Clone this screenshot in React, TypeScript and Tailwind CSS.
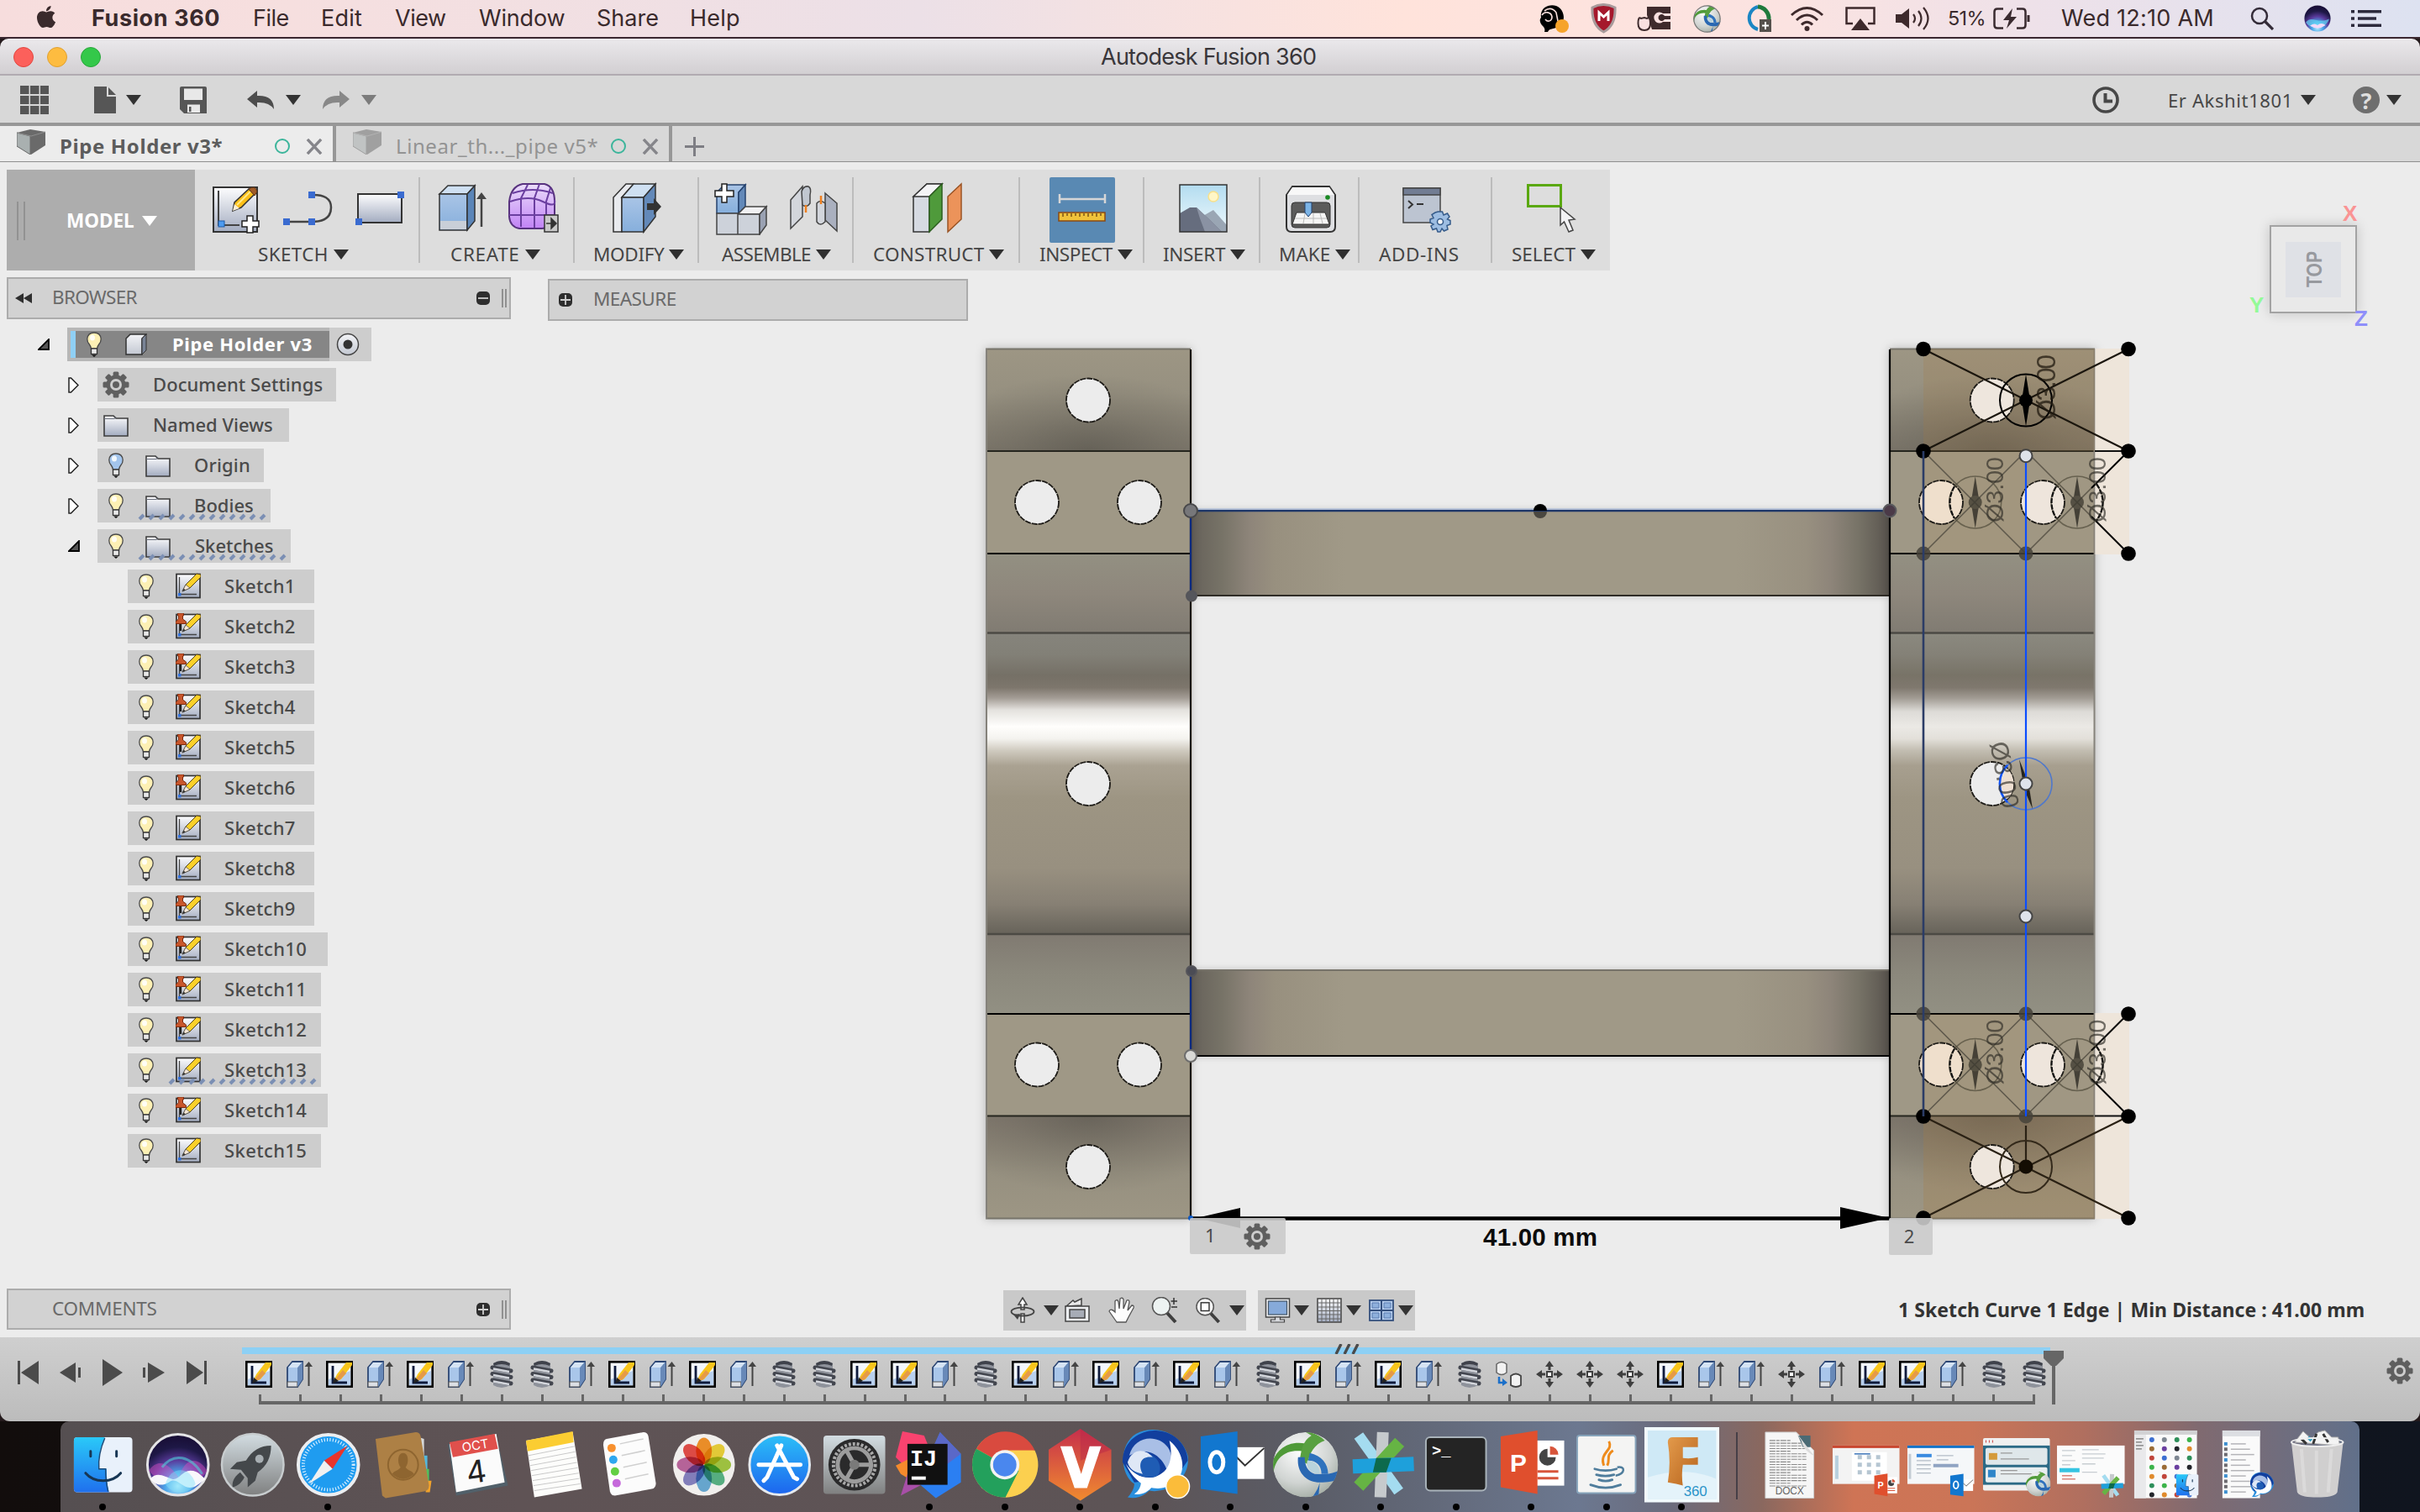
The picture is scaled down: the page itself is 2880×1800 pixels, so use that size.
import React, { useLayoutEffect, useRef, useState } from "react";
import { FaApple } from "react-icons/fa";

/* Text that spreads its letters so that it fills the width of its box. */
function Fit({ className, children }: { className: string; children: string }) {
  const outer = useRef<HTMLSpanElement>(null);
  const inner = useRef<HTMLSpanElement>(null);
  const [spacing, setSpacing] = useState(0);
  useLayoutEffect(() => {
    if (!outer.current || !inner.current) return;
    const free = outer.current.clientWidth - inner.current.offsetWidth;
    setSpacing(free / children.length);
  }, [children]);
  return (
    <span ref={outer} className={`block shrink-0 whitespace-nowrap ${className}`}>
      <span ref={inner} className="inline-block" style={{ letterSpacing: spacing }}>
        {children}
      </span>
    </span>
  );
}

function Arrow({ className = "ml-1.5 text-[#2f2f2f]" }: { className?: string }) {
  return (
    <svg className={`h-[12px] w-[18px] shrink-0 ${className}`} viewBox="0 0 18 12">
      <path d="M0 0H18L9 12Z" fill="currentColor" />
    </svg>
  );
}

function Ico({ box, className, children }: { box: string; className: string; children: React.ReactNode }) {
  return (
    <svg viewBox={box} className={`shrink-0 ${className}`} fill="none">
      {children}
    </svg>
  );
}

function Gear({ className }: { className: string }) {
  return (
    <svg viewBox="-16 -16 32 32" className={`shrink-0 ${className}`}>
      <g fill="#5f5f5f">
        {[0, 45, 90, 135].map((a) => (
          <rect key={a} x="-3.4" y="-15.5" width="6.8" height="31" rx="1.5" transform={`rotate(${a})`} />
        ))}
        <circle r="11.5" />
      </g>
      <circle r="7" fill="#cdcdcd" />
      <circle r="4" fill="#5f5f5f" />
    </svg>
  );
}

function Defs() {
  return (
    <svg className="absolute h-0 w-0">
      <defs>
        <linearGradient id="silver" x1="0" y1="0" x2="0" y2="1">
          <stop offset="0" stopColor="#fdfdfe" />
          <stop offset="1" stopColor="#a3acc0" />
        </linearGradient>
        <linearGradient id="silverLight" x1="0" y1="0" x2="0" y2="1">
          <stop offset="0" stopColor="#f3f4f7" />
          <stop offset="1" stopColor="#c3c8d2" />
        </linearGradient>
        <linearGradient id="blueFace" x1="0" y1="0" x2="0" y2="1">
          <stop offset="0" stopColor="#a9c4e6" />
          <stop offset="1" stopColor="#86afdc" />
        </linearGradient>
        <linearGradient id="purple" x1="0" y1="0" x2="0" y2="1">
          <stop offset="0" stopColor="#eadcfa" />
          <stop offset="1" stopColor="#c183f5" />
        </linearGradient>
        <linearGradient id="sky" x1="0" y1="0" x2="0" y2="1">
          <stop offset="0" stopColor="#b3dcf0" />
          <stop offset="1" stopColor="#eef8fc" />
        </linearGradient>
        <linearGradient id="mid" x1="0" y1="0" x2="0" y2="1">
          <stop offset="0" stopColor="#86847c" />
          <stop offset=".07" stopColor="#828077" />
          <stop offset=".14" stopColor="#757066" />
          <stop offset=".18" stopColor="#7d766c" />
          <stop offset=".215" stopColor="#a39c95" />
          <stop offset=".255" stopColor="#e4e2de" />
          <stop offset=".31" stopColor="#fffefc" />
          <stop offset=".35" stopColor="#f4f3ef" />
          <stop offset=".39" stopColor="#cfcabf" />
          <stop offset=".44" stopColor="#aaa292" />
          <stop offset=".55" stopColor="#9d9583" />
          <stop offset=".78" stopColor="#989080" />
          <stop offset=".9" stopColor="#878074" />
          <stop offset="1" stopColor="#67635a" />
        </linearGradient>
        <linearGradient id="midDull" x1="0" y1="0" x2="0" y2="1">
          <stop offset="0" stopColor="#8b897f" />
          <stop offset=".07" stopColor="#848177" />
          <stop offset=".14" stopColor="#787367" />
          <stop offset=".18" stopColor="#7f786e" />
          <stop offset=".215" stopColor="#a19b93" />
          <stop offset=".26" stopColor="#dddbd7" />
          <stop offset=".31" stopColor="#ebe9e5" />
          <stop offset=".35" stopColor="#e3e0da" />
          <stop offset=".39" stopColor="#c2bdb1" />
          <stop offset=".44" stopColor="#a79f8f" />
          <stop offset=".55" stopColor="#9d9583" />
          <stop offset=".78" stopColor="#989080" />
          <stop offset=".9" stopColor="#878074" />
          <stop offset="1" stopColor="#67635a" />
        </linearGradient>
        <linearGradient id="seg" x1="0" y1="0" x2="0" y2="1">
          <stop offset="0" stopColor="#9d9684" />
          <stop offset=".45" stopColor="#969080" />
          <stop offset="1" stopColor="#7f796d" />
        </linearGradient>
        <linearGradient id="segUp" x1="0" y1="1" x2="0" y2="0">
          <stop offset="0" stopColor="#9d9684" />
          <stop offset=".45" stopColor="#969080" />
          <stop offset="1" stopColor="#827a6f" />
        </linearGradient>
        <linearGradient id="soft" x1="0" y1="0" x2="0" y2="1">
          <stop offset="0" stopColor="#939082" />
          <stop offset=".5" stopColor="#8e877c" />
          <stop offset="1" stopColor="#807b72" />
        </linearGradient>
        <linearGradient id="softUp" x1="0" y1="1" x2="0" y2="0">
          <stop offset="0" stopColor="#929083" />
          <stop offset=".5" stopColor="#8b887c" />
          <stop offset="1" stopColor="#807a71" />
        </linearGradient>
        <radialGradient id="shadeDown" cx=".5" cy="1" r=".75">
          <stop offset="0" stopColor="#55524a" stopOpacity=".6" />
          <stop offset=".5" stopColor="#55524a" stopOpacity=".25" />
          <stop offset="1" stopColor="#55524a" stopOpacity="0" />
        </radialGradient>
        <radialGradient id="shadeUp" cx=".5" cy="0" r=".75">
          <stop offset="0" stopColor="#55524a" stopOpacity=".55" />
          <stop offset=".5" stopColor="#55524a" stopOpacity=".22" />
          <stop offset="1" stopColor="#55524a" stopOpacity="0" />
        </radialGradient>
        <linearGradient id="bar">
          <stop offset="0" stopColor="#66615a" />
          <stop offset=".045" stopColor="#777367" />
          <stop offset=".085" stopColor="#8e857a" />
          <stop offset=".12" stopColor="#98907f" />
          <stop offset=".22" stopColor="#a09987" />
          <stop offset=".78" stopColor="#a09987" />
          <stop offset=".88" stopColor="#989080" />
          <stop offset=".915" stopColor="#8e857a" />
          <stop offset=".955" stopColor="#777367" />
          <stop offset="1" stopColor="#59544e" />
        </linearGradient>
        <pattern id="hatch" width="12" height="10" patternUnits="userSpaceOnUse">
          <path d="M2 8L7 3" stroke="#7b8fb4" strokeWidth="4" />
        </pattern>
        <radialGradient id="siri" cx=".5" cy=".85" r=".85">
          <stop offset="0" stopColor="#bff0fd" />
          <stop offset=".25" stopColor="#4aa6ea" />
          <stop offset=".5" stopColor="#5a3a9c" />
          <stop offset=".75" stopColor="#1e1846" />
          <stop offset="1" stopColor="#170c33" />
        </radialGradient>
        <linearGradient id="gray" x1="0" y1="0" x2="0" y2="1">
          <stop offset="0" stopColor="#d3dde2" />
          <stop offset="1" stopColor="#7f8080" />
        </linearGradient>
        <linearGradient id="finder" x1="0" y1="0" x2="0" y2="1">
          <stop offset="0" stopColor="#2ac9f8" />
          <stop offset="1" stopColor="#1f70ee" />
        </linearGradient>
        <linearGradient id="store" x1="0" y1="0" x2="0" y2="1">
          <stop offset="0" stopColor="#2cc0f8" />
          <stop offset="1" stopColor="#1c64ee" />
        </linearGradient>
        <radialGradient id="orb" cx=".4" cy=".3" r=".8">
          <stop offset="0" stopColor="#fdfdfd" />
          <stop offset=".6" stopColor="#d0d4d2" />
          <stop offset="1" stopColor="#9aa49a" />
        </radialGradient>
        <linearGradient id="vivid" x1="0" y1="0" x2="0" y2="1">
          <stop offset="0" stopColor="#c62f4c" />
          <stop offset="1" stopColor="#f08b2f" />
        </linearGradient>
        <linearGradient id="fus" x1="0" y1="0" x2="1" y2="1">
          <stop offset="0" stopColor="#e39a4b" />
          <stop offset="1" stopColor="#b7641d" />
        </linearGradient>
        <clipPath id="disc"><circle cx="45" cy="45" r="39" /></clipPath>
      </defs>
    </svg>
  );
}

function OrbMark() {
  return (
    <g clipPath="url(#disc)">
      <circle cx="45" cy="45" r="39" fill="url(#orb)" />
      <path d="M6 58C8 34 24 24 48 30L54 22C30 14 12 22 4 44Z" fill="#4f9a38" />
      <path d="M42 4C54 6 62 10 68 16C56 20 50 30 47 44L38 40C40 26 42 16 52 10Z" fill="#58a040" />
      <path d="M36 36C34 54 46 66 62 66L60 88H50C56 80 60 74 62 66C74 66 82 64 88 60V50C76 58 66 56 56 56C48 54 44 46 44 36Z" fill="#2a68b2" />
      <path d="M50 31C64 34 72 44 72 56H64C64 46 58 40 48 40Z" fill="#2f72bd" />
      <path d="M47 40C45 48 50 56 62 56C62 46 56 40 47 40Z" fill="#b9d3dc" />
    </g>
  );
}

function BubbleMark() {
  return (
    <>
      <path d="M12 84C18 78 20 72 20 68C2 56 2 20 22 8C44 -4 76 6 84 34C88 62 60 80 38 76C30 84 20 86 12 84Z" fill="#2a8fdd" />
      <path d="M6 42C6 14 30 3 46 4C70 5 84 24 84 40L70 60L20 66Z" fill="#123f9e" />
      <path d="M14 34C20 10 48 8 60 24C66 32 66 46 60 54C54 34 36 22 14 34Z" fill="#a9bfe6" />
      <path d="M62 16C80 30 84 56 66 68C48 80 22 72 10 44C18 56 30 62 42 60C60 56 68 40 62 16Z" fill="#fff" />
      <path d="M14 44C16 28 38 26 48 40C54 50 50 60 42 60C30 60 18 58 14 44Z" fill="#1f5cb4" />
      <path d="M12 42C18 24 34 26 42 36C28 34 24 44 30 56C20 54 14 50 12 42Z" fill="#dfe8f6" />
      <path d="M20 80C26 76 28 70 28 66L42 71C36 78 28 82 20 80Z" fill="#fff" />
    </>
  );
}

function StarMark() {
  return (
    <g transform="translate(45 45)" strokeWidth="13" strokeLinejoin="round">
      <path d="M-27 -35L21 32" stroke="#a4dcf0" />
      <path d="M2 -39L-1 39" stroke="#c6cacd" strokeWidth="14" />
      <path d="M22 -27L-27 26" stroke="#66b444" strokeWidth="15" />
      <path d="M-34 2L39 -1" stroke="#1ea0db" strokeWidth="17" />
      <path d="M-6 -8H12L6 9H-10Z" fill="#0d6a4c" />
    </g>
  );
}

function FinderMark() {
  return (
    <>
      <rect x="11" y="12" width="70" height="66" rx="4" fill="#e9f1fb" />
      <path d="M15 12H48C42 26 40 38 41 50H50C50 60 51 70 53 78H15Q11 78 11 74V16Q11 12 15 12Z" fill="url(#finder)" />
      <path d="M31 29V35M62 29V35" stroke="#173654" strokeWidth="3" strokeLinecap="round" />
      <path d="M48 13C42 27 40 38 41 50H49C49 60 50 69 52 77" stroke="#1b4b79" strokeWidth="1.5" />
      <path d="M25 55C35 67 57 67 67 55" stroke="#173654" strokeWidth="3" strokeLinecap="round" />
    </>
  );
}

function OutlookMark() {
  return (
    <>
      <rect x="44" y="24" width="41" height="38" fill="#fff" />
      <path d="M52 36L62 46L85 25" stroke="#333" strokeWidth="2" />
      <path d="M9 11L53 5V80L9 74Z" fill="#1277cf" />
      <ellipse cx="28" cy="42" rx="8" ry="12" stroke="#fff" strokeWidth="5" />
    </>
  );
}

function PptMark() {
  return (
    <>
      <rect x="48" y="16" width="36" height="54" fill="#fff" />
      <path d="M64 26V36H74A10 10 0 1 1 64 26Z" fill="#444" />
      <path d="M67 23A10 10 0 0 1 77 33H67Z" fill="#d8553b" />
      <path d="M52 53H77M52 61H77" stroke="#d8553b" strokeWidth="3" />
      <path d="M8 11L52 4V80L8 72Z" fill="#e04f2d" />
      <text x="19" y="53" fontSize="30" fontWeight="700" fill="#fff" fontFamily="Liberation Sans">P</text>
    </>
  );
}

const petals = ["#f7962b", "#f0d73c", "#a6cd45", "#5bb98a", "#6cb0dd", "#8a86c8", "#c069a4", "#e9504a"];

const dock: { name: string; open?: boolean; art: React.ReactNode }[] = [
  { name: "finder", open: true, art: <FinderMark /> },
  {
    name: "siri",
    art: (
      <>
        <circle cx="45" cy="45" r="36.5" fill="url(#siri)" stroke="#e4e4e6" strokeWidth="3" />
        <path d="M10 52C22 36 34 44 46 60C54 34 70 36 80 52C72 66 60 62 50 60C36 68 22 66 10 52Z" fill="#d94fc0" opacity=".45" />
        <path d="M26 48C40 30 60 34 74 56" stroke="#4fd0d8" strokeWidth="3" opacity=".6" />
        <path d="M12 62C20 52 30 60 38 62C46 64 50 52 60 52C70 52 74 60 78 62C70 68 64 74 56 72C46 68 42 60 34 66C24 72 18 68 12 62Z" fill="#fff" opacity=".95" />
        <path d="M30 68C36 46 60 46 66 68C58 82 38 82 30 68Z" fill="#7fe0f8" opacity=".45" />
      </>
    ),
  },
  {
    name: "launchpad",
    art: (
      <>
        <circle cx="45" cy="45" r="37" fill="url(#gray)" stroke="#c7ccce" strokeWidth="2.5" />
        <path d="M67 22C54 22 44 28 37 40L26 42L18 50L31 51L39 61V72L48 64L51 54C62 46 67 36 67 22Z" fill="#44484b" />
        <circle cx="53" cy="38" r="5" fill="#a8afb3" />
        <path d="M30 54C22 60 20 66 21 72C28 70 32 66 35 60Z" fill="#44484b" />
      </>
    ),
  },
  {
    name: "safari",
    open: true,
    art: (
      <>
        <circle cx="45" cy="45" r="36" fill="#1f9cf0" stroke="#eceef0" strokeWidth="4" />
        <circle cx="45" cy="45" r="30" stroke="#d8efff" strokeWidth="4" strokeDasharray="1.2 2.2" />
        <path d="M68 22L50 50L40 40Z" fill="#e8342c" />
        <path d="M22 68L40 40L50 50Z" fill="#f1f1f1" />
      </>
    ),
  },
  {
    name: "contacts",
    art: (
      <>
        <path d="M64 12L70 14V36H66Z" fill="#d7d9da" />
        <path d="M68 34H74V52H68Z" fill="#55b9dd" />
        <path d="M70 50H76V66H70Z" fill="#52c15d" />
        <path d="M72 64H79L77 78H72Z" fill="#f2a32b" />
        <path d="M12 14L60 6Q65 6 66 11L76 70Q76 76 70 77L24 85L20 82Z" fill="#ad8045" />
        <circle cx="45" cy="45" r="18" stroke="#8e6530" strokeWidth="2" />
        <path d="M45 31C38 31 38 44 42 48C40 52 34 52 32 56Q45 68 58 56C56 52 50 52 48 48C52 44 52 31 45 31Z" fill="#8e6530" />
      </>
    ),
  },
  {
    name: "calendar",
    art: (
      <>
        <path d="M8 20L66 10L80 70L18 82Z" fill="#51606a" />
        <path d="M10 20L66 8L76 66L18 78Z" fill="#fbfbfb" />
        <path d="M10 18L64 8L68 26L14 36Z" fill="#e0504c" />
        <text x="26" y="30" fontSize="15" fill="#fff" fontFamily="Inter" transform="rotate(-10 26 30)">OCT</text>
        <text x="32" y="68" fontSize="37" fill="#222" fontFamily="Inter" transform="rotate(-8 32 68)">4</text>
      </>
    ),
  },
  {
    name: "notes",
    art: (
      <>
        <path d="M12 16L68 6L79 74L22 84Z" fill="#fdfdfb" />
        <path d="M12 16L68 5L69 18L14 29Z" fill="#fbcd32" />
        {[0, 1, 2, 3, 4, 5, 6, 7].map((i) => (
          <path key={i} d={`M${15 + i} ${34 + i * 6}L${70 + i} ${23 + i * 6.4}`} stroke="#c9c9c9" />
        ))}
      </>
    ),
  },
  {
    name: "reminders",
    art: (
      <>
        <path d="M18 14L62 6Q67 6 68 11L77 67Q77 73 72 74L28 82Q23 82 22 77L14 21Q14 15 18 14Z" fill="#fcfcfc" />
        {["#f7902e", "#2ea7ef", "#62cf43", "#c669db"].map((c, i) => (
          <g key={c}>
            <circle cx={24 + i * 2} cy={25 + i * 14} r="5" fill={c} />
            <path d={`M${34 + i * 2} ${20 + i * 14}L${62 + i * 2} ${14 + i * 14}`} stroke="#d0d0d0" strokeWidth="1.5" />
          </g>
        ))}
      </>
    ),
  },
  {
    name: "photos",
    art: (
      <>
        <circle cx="45" cy="45" r="37" fill="#f1efed" />
        {petals.map((c, i) => (
          <ellipse key={c} className="mix-blend-multiply" cx="45" cy="28.500" rx="9.500" ry="16" fill={c} transform={`rotate(${i * 45} 45 45)`} />
        ))}
      </>
    ),
  },
  {
    name: "appstore",
    art: (
      <>
        <circle cx="45" cy="45" r="36" fill="url(#store)" stroke="#e6eaee" strokeWidth="3" />
        <path d="M47 22L30 60L26 64M42 22L62 60L66 62" stroke="#fff" strokeWidth="5" strokeLinecap="round" />
        <path d="M20 45H70" stroke="#fff" strokeWidth="5" strokeLinecap="round" />
      </>
    ),
  },
  {
    name: "preferences",
    art: (
      <>
        <rect x="8" y="10" width="74" height="70" rx="4" fill="url(#gray)" />
        <circle cx="45" cy="45" r="31" fill="#2a2a2b" />
        <circle cx="45" cy="45" r="25" stroke="#a9a9a9" strokeWidth="4" strokeDasharray="3 2" />
        <circle cx="45" cy="45" r="20" stroke="#9c9c9c" strokeWidth="5" />
        <path d="M45 45L63 45M45 45L36 29M45 45L36 61" stroke="#9c9c9c" strokeWidth="5" />
        <circle cx="45" cy="45" r="6" fill="#7a7a7a" />
      </>
    ),
  },
  {
    name: "idea",
    open: true,
    art: (
      <>
        <path d="M12 5L38 10L46 30L20 52L4 36Z" fill="#f8436f" />
        <path d="M4 46L20 38V62L10 56Z" fill="#f58a2c" />
        <path d="M18 56L44 64L10 82Z" fill="#a84fa8" />
        <path d="M57 6L82 32V66L52 85L30 66Z" fill="#2b7ff2" />
        <path d="M57 6L82 32L66 44L46 30Z" fill="#5a68c8" />
        <rect x="18" y="20" width="48" height="49" fill="#111" />
        <text x="21" y="46" fontSize="27" fontWeight="700" fill="#fff" fontFamily="Liberation Mono">IJ</text>
        <path d="M23 61H40" stroke="#fff" strokeWidth="4" />
      </>
    ),
  },
  {
    name: "chrome",
    open: true,
    art: (
      <>
        <circle cx="45" cy="45" r="39" fill="#fcd04f" />
        <path d="M45 45L11 26A39 39 0 0 1 81 28H45Z" fill="#d94a3f" />
        <path d="M45 45L11 26A39 39 0 0 0 46 84L62 52Z" fill="#23a05c" />
        <path d="M45 28H81A39 39 0 0 1 46 84L62 52Z" fill="#fcd04f" />
        <circle cx="45" cy="45" r="17.5" fill="#f3f3f3" />
        <circle cx="45" cy="45" r="14" fill="#4a87ee" />
      </>
    ),
  },
  {
    name: "vivaldi",
    open: true,
    art: (
      <>
        <path d="M45 2L82 27V64L45 88L7 64V27Z" fill="url(#vivid)" />
        <path d="M45 2L82 27L45 40Z" fill="#b92848" opacity=".5" />
        <path d="M21 23H35L46 56L56 23H70L53 73H38Z" fill="#fff" />
      </>
    ),
  },
  {
    name: "messenger",
    open: true,
    art: (
      <>
        <BubbleMark />
        <circle cx="72" cy="71" r="14" fill="#fbbc3a" stroke="#fff" strokeWidth="1.5" />
      </>
    ),
  },
  { name: "outlook", open: true, art: <OutlookMark /> },
  { name: "vpn", open: true, art: <OrbMark /> },
  { name: "hub", open: true, art: <StarMark /> },
  {
    name: "terminal",
    open: true,
    art: (
      <>
        <rect x="9" y="12" width="72" height="64" rx="5" fill="#242424" stroke="#a9b3ba" strokeWidth="2" />
        <text x="16" y="34" fontSize="19" fontWeight="700" fill="#fff" fontFamily="Liberation Mono">&gt;_</text>
      </>
    ),
  },
  { name: "powerpoint", open: true, art: <PptMark /> },
  {
    name: "java",
    open: true,
    art: (
      <>
        <rect x="10" y="10" width="70" height="69" rx="3" fill="#f4f4f3" stroke="#86a3ba" strokeWidth="2" />
        <path d="M48 17C54 28 36 30 42 46M53 28C44 34 50 38 46 46" stroke="#ee8b1c" strokeWidth="3" />
        <path d="M31 50Q44 54 57 50M33 57Q44 60 54 57M36 63Q44 66 52 63M26 69Q44 76 62 69" stroke="#4f7d9c" strokeWidth="2.800" strokeLinecap="round" />
        <path d="M58 48C68 46 68 56 56 58" stroke="#4f7d9c" strokeWidth="2.500" />
      </>
    ),
  },
  {
    name: "fusion",
    open: true,
    art: (
      <>
        <rect x="2" y="2" width="86" height="86" fill="#cfe9f6" stroke="#f2fafd" strokeWidth="4" />
        <path d="M4 60Q50 46 86 62V86H4Z" fill="#e4f3fa" />
        <path d="M28 18Q28 12 34 12H64V24H46V37Q56 38 64 36V45H46Q44 58 46 70L38 68L28 66Q32 42 28 18Z" fill="url(#fus)" />
        <text x="47" y="82" fontSize="17" fill="#2a93c9" fontFamily="Liberation Sans" textLength="28">360</text>
      </>
    ),
  },
];

const minis: { name: string; art: React.ReactNode }[] = [
  {
    name: "docx",
    art: (
      <>
        <path d="M15 6H52L73 28V85H15Z" fill="#f6f6f6" stroke="#ccc" />
        {Array.from({ length: 18 }, (_, i) => (
          <path key={i} d={`M20 ${16 + i * 3.2}H${i % 4 === 0 ? 46 : 64}`} stroke="#8a8a8a" strokeWidth="1.1" strokeDasharray="7 1 4 1" />
        ))}
        <path d="M54 10H69V24H60Z" fill="#4a6a74" />
        <path d="M50 4L73 34C66 30 60 26 58 16Z" fill="#ddd" />
        <text x="27" y="80" fontSize="12" fill="#666" fontFamily="Liberation Sans" textLength="34">DOCX</text>
      </>
    ),
  },
  {
    name: "slides",
    art: (
      <>
        <rect x="5" y="22" width="80" height="46" fill="#f3f3f3" />
        <rect x="5" y="22" width="80" height="3" fill="#c8462f" />
        <rect x="8" y="34" width="4" height="28" fill="#b8d0de" />
        <rect x="28" y="30" width="42" height="34" fill="#fff" />
        {[36, 45, 54].map((y) => (
          <path key={y} d={`M35 ${y}H40M46 ${y}H51M57 ${y}H62`} stroke="#b6c6d2" strokeWidth="5" />
        ))}
        <path d="M31 32H50" stroke="#3c74b8" strokeWidth="1.500" />
        <g transform="translate(52 54) scale(.36)"><PptMark /></g>
      </>
    ),
  },
  {
    name: "mail",
    art: (
      <>
        <rect x="5" y="22" width="80" height="46" fill="#f5f7f9" />
        <rect x="5" y="22" width="80" height="3" fill="#1272c8" />
        <path d="M8 32V62" stroke="#c4ccd4" strokeWidth="3" />
        <rect x="16" y="32" width="18" height="4" fill="#3a8be0" />
        <path d="M16 40H33M16 45H33M16 50H33M16 55H33M40 34H60M40 39H54" stroke="#b3bcc6" strokeWidth="1.3" />
        <rect x="36" y="44" width="30" height="4" fill="#8fa3c2" />
        <g transform="translate(53 54) scale(.36)"><OutlookMark /></g>
      </>
    ),
  },
  {
    name: "vpnwin",
    art: (
      <>
        <rect x="5" y="13" width="80" height="63" rx="2" fill="#f0f0f0" />
        <rect x="5" y="22" width="80" height="47" fill="#2c6a86" />
        <rect x="8" y="25" width="74" height="20" rx="2" fill="#dfe7ea" />
        <rect x="8" y="48" width="74" height="18" rx="2" fill="#e7edef" />
        <path d="M8 17H9M12 17H13M16 17H17" stroke="#c44" strokeWidth="3" />
        <rect x="12" y="31" width="10" height="8" fill="#d49a3a" />
        <path d="M26 31H40M26 38H60M26 52H46M26 56H66" stroke="#999" strokeWidth="1.2" />
        <rect x="11" y="51" width="9" height="9" fill="#2f86c9" />
        <g transform="translate(54 51) scale(.38)"><OrbMark /></g>
      </>
    ),
  },
  {
    name: "chat",
    art: (
      <>
        <rect x="4" y="22" width="81" height="46" fill="#fbfbfb" />
        <path d="M10 28H26M10 34H22M10 40H26M10 45H20M34 27H54M34 32H62M34 37H60M34 44H50M34 54H52" stroke="#c8cdd2" strokeWidth="1.3" />
        <rect x="7" y="49" width="24" height="5" fill="#35c4e2" />
        <path d="M10 58H22M10 62H26" stroke="#d8837a" strokeWidth="1.5" />
        <g transform="translate(53 54) scale(.36)"><StarMark /></g>
      </>
    ),
  },
  {
    name: "apps",
    art: (
      <>
        <rect x="6" y="4" width="75" height="81" fill="#fafafa" />
        <rect x="6" y="4" width="14" height="81" fill="#e9e9eb" />
        <rect x="6" y="4" width="75" height="5" fill="#d2d2d4" />
        <path d="M8 14H17M8 18H15M8 22H17M8 26H15" stroke="#777" strokeWidth="1.300" />
        {Array.from({ length: 28 }, (_, i) => (
          <circle
            key={i}
            cx={27 + (i % 4) * 15}
            cy={15 + Math.floor(i / 4) * 11}
            r="3"
            fill={["#3c6fd1", "#2e8f5a", "#9a6b35", "#23252b", "#c0453a", "#7e8792", "#3bb34a", "#6a3fa0", "#e08a2c"][(i * 5) % 9]}
          />
        ))}
        <g transform="translate(52 52) scale(.38)"><FinderMark /></g>
      </>
    ),
  },
  {
    name: "contactsWin",
    art: (
      <>
        <rect x="22" y="4" width="45" height="81" fill="#fafafa" />
        <rect x="22" y="4" width="45" height="7" fill="#dcdee2" />
        {Array.from({ length: 10 }, (_, i) => (
          <g key={i}>
            <rect x="24" y={18 + i * 6.4} width="4" height="4" fill={i % 3 ? "#6c6a70" : "#3d8fd0"} />
            <path d={`M32 ${20 + i * 6.4}H${50 + (i % 3) * 5}`} stroke="#b4b4b8" strokeWidth="1.5" />
          </g>
        ))}
        <g transform="translate(53 53) scale(.36)"><BubbleMark /></g>
      </>
    ),
  },
  {
    name: "trash",
    art: (
      <>
        <path d="M18 18L28 5L38 14L46 6L54 4L62 12L70 12L72 22Z" fill="#f4f4f4" stroke="#a7a7a7" />
        <path d="M26 14L32 20M44 8L40 20M52 8L58 18" stroke="#333" strokeWidth="3" />
        <path d="M34 12L38 16" stroke="#2b9ac0" strokeWidth="4" />
        <path d="M14 18Q45 28 76 18L69 78Q66 84 45 84Q24 84 21 78Z" fill="#d8d6d5" opacity=".93" />
        <path d="M26 26L30 78M44 28V80M62 26L58 78" stroke="#eceaea" strokeWidth="4" opacity=".4" />
        <ellipse cx="45" cy="18" rx="31" ry="5" stroke="#efefef" strokeWidth="2" />
      </>
    ),
  },
];

function DockItem({ art, open }: { art: React.ReactNode; open?: boolean }) {
  return (
    <div className="isolate flex w-[89.5px] shrink-0 flex-col items-center">
      <svg viewBox="0 0 90 90" className="h-[89.5px] w-[89.5px]" fill="none">{art}</svg>
      {open && <div className="mt-px h-2 w-2 rounded-full bg-black" />}
    </div>
  );
}

/* ---------- top bars ---------- */

function MenuBar() {
  return (
    <header className="flex h-[46px] items-center border-b-2 border-[#3a2730] bg-[linear-gradient(90deg,#f7dddd_0%,#f6dfdf_12%,#ece0e7_38%,#ffe3db_58%,#fbe3e1_74%,#eee1e9_84%,#dde2f1_100%)] font-[Inter,sans-serif] text-[27px] text-[#3a2a2c]">
      <FaApple className="ml-[40px] h-[34px] w-[30px] shrink-0 pb-1" />
      <Fit className="ml-[39px] w-[153px] font-bold">Fusion 360</Fit>
      <Fit className="ml-[39px] w-[43px]">File</Fit>
      <Fit className="ml-[38px] w-[49px]">Edit</Fit>
      <Fit className="ml-[39px] w-[61px]">View</Fit>
      <Fit className="ml-[39px] w-[102px]">Window</Fit>
      <Fit className="ml-[38px] w-[74px]">Share</Fit>
      <Fit className="ml-[37px] w-[60px]">Help</Fit>
      <div className="flex h-11 grow items-center justify-end">
        <Ico box="0 0 38 34" className="h-[34px] w-[38px]">
          <path d="M4 16C2 4 14 -1 22 2C32 6 34 20 26 26C20 30 14 28 12 33L8 33C9 30 8 28 6 26C2 22 2 18 4 16Z" fill="#000" />
          <path d="M5 13C8 8 16 9 17 15C17 20 12 22 9 18M8 8Q16 2 22 10L24 20" stroke="#f9dfdc" strokeWidth="1.600" />
          <circle cx="29" cy="26" r="8" fill="#f6a32a" />
        </Ico>
        <Ico box="0 0 31 36" className="ml-[25px] h-[36px] w-[31px]">
          <path d="M2 5Q15 -2 29 5Q30 26 15.500 34Q1 26 2 5Z" fill="#a5182c" stroke="#a79a9b" strokeWidth="3" />
          <path d="M10 21V11L15.500 16L21 11V21" stroke="#fff" strokeWidth="3" />
        </Ico>
        <Ico box="0 0 40 32" className="ml-[24px] h-[32px] w-[40px]">
          <path d="M12 2H40V29H18L12 12Z" fill="#3e2a2c" />
          <path d="M40 10H31A6.500 6.500 0 1 0 31 20H40V17H33A4 4 0 1 1 33 13H40Z" fill="#f9e0e0" />
          <path d="M1.500 22Q1.500 13 5 16L9 15L12 16Q16 13 16 22Q16 30 9 30Q1.500 30 1.500 22Z" fill="#f9e0e0" stroke="#3e2a2c" strokeWidth="2" />
        </Ico>
        <Ico box="5 5 80 80" className="ml-[27px] h-[33px] w-[33px]">
          <OrbMark />
          <circle cx="45" cy="45" r="38" stroke="#777" strokeWidth="3" />
        </Ico>
        <Ico box="0 0 32 34" className="ml-[28px] h-[34px] w-[32px]">
          <path d="M16 30A14 14 0 0 1 16 3" stroke="#1a86c4" strokeWidth="4" />
          <path d="M16 3A14 14 0 0 1 29 18" stroke="#1f7a3c" strokeWidth="5" />
          <rect x="18" y="18" width="14" height="15" fill="#55504c" />
          <path d="M25 21V30M21 25.500H29" stroke="#fff" strokeWidth="2" />
        </Ico>
        <Ico box="0 0 41 30" className="ml-[22px] h-[30px] w-[41px]">
          <path d="M2 11Q20.500 -6 39 11M8 17Q20.500 5 33 17M14 22.500Q20.500 16 27 22.500" stroke="#3e2a2c" strokeWidth="3" />
          <circle cx="20.500" cy="27" r="3" fill="#3e2a2c" />
        </Ico>
        <Ico box="0 0 36 30" className="ml-[25px] h-[30px] w-[36px]">
          <path d="M9 21H1.500V2.500H34.500V21H27" stroke="#3e2a2c" strokeWidth="2.500" />
          <path d="M18 15L29 29H7Z" fill="#3e2a2c" />
        </Ico>
        <Ico box="0 0 41 30" className="ml-[24px] h-[30px] w-[41px]">
          <path d="M0 10H7L16 3V27L7 20H0Z" fill="#3e2a2c" />
          <path d="M21 10Q25 15 21 20M27 6Q34 15 27 24M33 2Q44 15 33 28" stroke="#3e2a2c" strokeWidth="2.200" />
        </Ico>
        <Fit className="ml-[21px] w-[45px] text-[23.5px]">51%</Fit>
        <Ico box="0 0 45 26" className="ml-[9px] h-[26px] w-[45px]">
          <path d="M12 1.500H5Q1.500 1.500 1.500 5V21Q1.500 24.500 5 24.500H12M28 1.500H35Q38.500 1.500 38.500 5V21Q38.500 24.500 35 24.500H28" stroke="#3a2b30" strokeWidth="2.500" />
          <path d="M42 9V17" stroke="#3a2b30" strokeWidth="3" />
          <path d="M23 1L12 15H19L16 25L28 11H21Z" fill="#3a2b30" />
        </Ico>
        <Fit className="ml-[36px] w-[182px]">Wed 12:10 AM</Fit>
        <Ico box="0 0 28 28" className="ml-[43px] h-[28px] w-[28px]">
          <circle cx="11" cy="11" r="9" stroke="#332b38" strokeWidth="2.500" />
          <path d="M17.500 17.500L27 27" stroke="#332b38" strokeWidth="3.200" />
        </Ico>
        <Ico box="7 7 76 76" className="ml-[36px] h-[32px] w-[32px]">
          <circle cx="45" cy="45" r="37" fill="url(#siri)" />
          <path d="M12 56C28 34 44 62 78 46C70 76 24 76 12 56Z" fill="#62d6f4" opacity=".7" />
          <path d="M24 66Q36 56 45 64Q56 54 68 64Q46 80 24 66Z" fill="#f3d9f8" />
        </Ico>
        <Ico box="0 0 36 20" className="mr-[46px] ml-[24px] h-[20px] w-[36px]">
          <path d="M0 1.800H4M8 1.800H36M0 10H4M8 10H30M0 18.200H4M8 18.200H36" stroke="#2c2a3c" strokeWidth="3.400" />
        </Ico>
      </div>
    </header>
  );
}

function TitleBar() {
  return (
    <div className="flex h-[44px] items-center rounded-t-[10px] border-b-2 border-[#b1abb1] bg-linear-to-b from-[#ebe9ec] to-[#d2cfd2] font-[Inter,sans-serif]">
      <div className="ml-[16px] flex gap-4 pt-px">
        <div className="h-6 w-6 rounded-full border border-[#e2463f] bg-[#fc605b]" />
        <div className="h-6 w-6 rounded-full border border-[#e0a030] bg-[#fdbc40]" />
        <div className="h-6 w-6 rounded-full border border-[#29a63a] bg-[#34c84a]" />
      </div>
      <Fit className="ml-[1190px] w-[256px] pt-0.5 text-[27px] text-[#39363a]">Autodesk Fusion 360</Fit>
    </div>
  );
}

function QuickBar() {
  return (
    <div className="flex h-[60px] items-center border-b-4 border-[#979797] bg-[#d8d8d8] pt-0.5">
      <Ico box="0 0 34 34" className="ml-[24px] h-[34px] w-[34px]">
        {[0, 12, 24].map((y) => [0, 12, 24].map((x) => <rect key={`${x}-${y}`} x={x} y={y} width="10.500" height="10" fill="#565656" />))}
      </Ico>
      <Ico box="0 0 26 32" className="ml-[54px] h-[32px] w-[26px]">
        <path d="M0 0H15V12H26V32H0Z" fill="#565656" />
        <path d="M17 1L26 10H17Z" fill="#565656" />
      </Ico>
      <Arrow className="ml-[12px] text-[#333]" />
      <Ico box="0 0 32 32" className="ml-[46px] h-[32px] w-[32px]">
        <path d="M2 0H30Q32 0 32 2V32H5L0 27V2Q0 0 2 0Z" fill="#565656" />
        <rect x="5" y="2.500" width="22" height="13.500" fill="#e8e8e8" />
        <rect x="9" y="21.500" width="15" height="9.500" fill="#e8e8e8" />
        <rect x="11" y="24" width="2.500" height="6" fill="#565656" />
      </Ico>
      <Ico box="0 0 32 22" className="ml-[48px] h-[22px] w-[32px]">
        <path d="M0 10L12 0V6Q32 5 32 22Q26 13 12 14V20Z" fill="#4d4d4d" />
      </Ico>
      <Arrow className="ml-[14px] text-[#333]" />
      <Ico box="0 0 32 22" className="ml-[26px] h-[22px] w-[32px]">
        <path d="M32 10L20 0V6Q0 5 0 22Q6 13 20 14V20Z" fill="#888" />
      </Ico>
      <Arrow className="ml-[14px] text-[#7c7c7c]" />
      <Ico box="0 0 32 32" className="ml-auto h-[32px] w-[32px]">
        <circle cx="16" cy="16" r="14" stroke="#474747" strokeWidth="3.600" />
        <path d="M15.500 8V17.500H24" stroke="#474747" strokeWidth="4" />
      </Ico>
      <Fit className="ml-[58px] w-[149px] font-[Noto_Sans,sans-serif] text-[22px] text-[#474747]">Er Akshit1801</Fit>
      <Arrow className="ml-[9px] text-[#333]" />
      <div className="ml-[44px] flex h-8 w-8 items-center justify-center rounded-full bg-[#6e6e6e] font-[Noto_Sans,sans-serif] text-[27px] leading-none font-bold text-[#dedede]">?</div>
      <Arrow className="mr-[22px] ml-[8px] text-[#333]" />
    </div>
  );
}

function TabCube({ dim }: { dim?: boolean }) {
  return (
    <Ico box="0 0 34 30" className={`ml-[20px] h-[30px] w-[34px] ${dim ? "opacity-50" : ""}`}>
      <path d="M0 4L16 0L34 3L34 19L17 30L0 20Z" fill="#6a6a6a" />
      <path d="M0 4L16 8V30L0 20Z" fill="#a9b0b0" />
      <path d="M0 4L16 8V30L0 20Z" stroke="#6a6a6a" />
      <path d="M0 4L17 8L34 3" stroke="#8e8e8e" />
    </Ico>
  );
}

function TabEnd() {
  return (
    <>
      <div className="h-[18px] w-[18px] rounded-full border-2 border-[#3cb59b]" />
      <svg viewBox="0 0 20 20" className="ml-[19px] h-[19px] w-[20px]">
        <path d="M1.500 1L18.500 19M18.500 1L1.500 19" stroke="#85858a" strokeWidth="3.600" />
      </svg>
    </>
  );
}

function Tabs() {
  return (
    <div className="flex h-[43px] border-b border-[#8f8f8f] bg-[#d8d8d8] font-[Noto_Sans,sans-serif] text-[24px]">
      <div className="flex w-[400px] items-center border-r-4 border-[#979797] bg-[#ececec]">
        <div className="-mt-1 flex"><TabCube /></div>
        <Fit className="ml-[17px] w-[194px] pt-1.5 font-bold text-[#5c5c5c]">Pipe Holder v3*</Fit>
        <div className="ml-[62px] flex items-center pt-1.5"><TabEnd /></div>
      </div>
      <div className="flex w-[400px] items-center border-r-4 border-[#979797]">
        <div className="-mt-1 flex"><TabCube dim /></div>
        <Fit className="ml-[17px] w-[241px] pt-1.5 text-[#939393]">Linear_th..._pipe v5*</Fit>
        <div className="ml-[15px] flex items-center pt-1.5"><TabEnd /></div>
      </div>
      <svg viewBox="0 0 23 23" className="mt-[13px] ml-[15px] h-[23px] w-[23px]">
        <path d="M11.500 0V23M0 11.500H23" stroke="#7e7e84" strokeWidth="3" />
      </svg>
    </div>
  );
}

/* ---------- ribbon ---------- */

function Group({ width, iconPad, labelPad, label, labelWidth, arrow = true, last, children }: {
  width: string; iconPad: string; labelPad: string; label: string; labelWidth: string; arrow?: boolean; last?: boolean; children: React.ReactNode;
}) {
  return (
    <div className={`flex shrink-0 ${width}`}>
      <div className="flex grow flex-col">
        <div className={`flex h-[86px] ${iconPad}`}>{children}</div>
        <div className={`flex h-[30px] items-center ${labelPad}`}>
          <Fit className={labelWidth}>{label}</Fit>
          {arrow && <Arrow />}
        </div>
      </div>
      {!last && <div className="mt-[9px] h-[102px] w-[2px] bg-[#bcbcbc]" />}
    </div>
  );
}

function Ribbon() {
  const big = "mt-[14px] h-[64px] w-[64px]";
  return (
    <div className="ml-2 flex h-[120px] w-[1908px] bg-[#dddddd] font-[Noto_Sans,sans-serif] text-[22.5px] text-[#454545]">
      <div className="flex w-[224px] items-center bg-[#adadad] pt-0.5">
        <div className="ml-[12px] h-[46px] w-[10px] border-x-2 border-[#929292]" />
        <Fit className="ml-[49px] w-[81px] font-bold text-white">MODEL</Fit>
        <Arrow className="ml-[9px] text-white" />
      </div>
      <Group width="w-[268px]" iconPad="pl-4 gap-[22px]" labelPad="pl-[75px]" label="SKETCH" labelWidth="w-[84px]">
        <Ico box="248 216 64 64" className={big}>
          <rect x="254" y="223" width="52" height="53" fill="url(#silver)" stroke="#333" strokeWidth="2" />
          <path d="M260 227V268H285" stroke="#444" strokeWidth="2" />
          <rect x="260" y="263" width="7" height="7" fill="#4d9bf0" stroke="#1d5aa8" />
          <path d="M277 251L279 241L296 225L303 231L287 247Z" fill="#fcbf17" stroke="#333" strokeWidth="1.500" />
          <path d="M282 244L298 228" stroke="#ffe98a" strokeWidth="2" />
          <path d="M296 225Q304 220 306 228L303 233Z" fill="#a05c28" stroke="#5e3313" strokeWidth="1" />
          <path d="M277 251L279 243L285 248Z" fill="#fbeed5" />
          <path d="M294 257H301V263H308V270H301V277H294V270H288V263H294Z" fill="#fff" stroke="#222" strokeWidth="1.500" />
        </Ico>
        <Ico box="334 216 64 64" className={big}>
          <path d="M341 264H371Q394 264 394 247Q394 231 370 232" stroke="#444" strokeWidth="2.500" />
          <path d="M337 260H345V268H337ZM367 260H375V268H367ZM367 228H375V236H367Z" fill="#3a6bd0" />
        </Ico>
        <Ico box="420 216 64 64" className={big}>
          <rect x="426" y="231" width="52" height="34" fill="url(#silver)" stroke="#333" strokeWidth="2" />
          <path d="M473 228H481V236H473ZM423 260H431V268H423Z" fill="#3a6bd0" />
        </Ico>
      </Group>
      <Group width="w-[184px]" iconPad="pl-4 gap-[22px]" labelPad="pl-[36px]" label="CREATE" labelWidth="w-[83px]">
        <Ico box="516 216 64 64" className={big}>
          <path d="M523 231L533 221H565L556 231Z" fill="#cfe0f2" stroke="#333" strokeWidth="1.500" />
          <rect x="523" y="231" width="33" height="43" fill="url(#blueFace)" stroke="#333" strokeWidth="1.500" />
          <rect x="524" y="263" width="31" height="10" fill="#c9cfd8" />
          <path d="M556 231L565 221V263L556 274Z" fill="#5b85b8" stroke="#333" strokeWidth="1.500" />
          <path d="M573 270V234" stroke="#444" strokeWidth="2.500" />
          <path d="M567 237L573 229L579 237Z" fill="#444" />
        </Ico>
        <Ico box="602 216 66 64" className="mt-[14px] h-[64px] w-[66px]">
          <path d="M606 240Q608 222 622 219H648Q660 222 660 240V260Q656 272 645 272H618Q607 270 606 258Z" fill="url(#purple)" stroke="#58327f" strokeWidth="2" />
          <path d="M607 240Q630 232 646 240T660 238M606 256H660M620 270V236L628 220M636 271V236L642 219M650 268V240L655 224M610 230Q634 222 658 230" stroke="#6b3fa0" strokeWidth="2" />
          <rect x="648" y="256" width="16" height="20" fill="#c9c9c9" stroke="#333" strokeWidth="1.500" />
          <path d="M650 266H656V260L662 266L656 272V266" fill="#333" stroke="#333" strokeWidth="1.500" />
        </Ico>
      </Group>
      <Group width="w-[148px]" iconPad="pl-[42px]" labelPad="pl-[22px]" label="MODIFY" labelWidth="w-[84px]">
        <Ico box="726 216 64 64" className={big}>
          <path d="M730 235L745 219H754L740 235V276H730Z" fill="#e8eaee" stroke="#333" strokeWidth="1.500" />
          <path d="M740 235L754 219H780L766 235Z" fill="#cfe0f2" stroke="#333" strokeWidth="1.500" />
          <rect x="740" y="235" width="26" height="41" fill="url(#blueFace)" stroke="#333" strokeWidth="1.500" />
          <path d="M766 235L780 219V258L766 276Z" fill="#6389b9" stroke="#333" strokeWidth="1.500" />
          <path d="M770 242H778V236L787 246L778 256V250H770Z" fill="#333" />
        </Ico>
      </Group>
      <Group width="w-[184px]" iconPad="pl-[4px] gap-[24px]" labelPad="pl-[27px]" label="ASSEMBLE" labelWidth="w-[106px]">
        <Ico box="836 216 80 64" className="mt-[14px] h-[64px] w-[80px]">
          <path d="M853 229L862 220H887L879 229V254H853Z" fill="url(#blueFace)" stroke="#24426e" strokeWidth="1.500" />
          <path d="M879 229L887 220V246L879 254Z" fill="#6389b9" stroke="#24426e" strokeWidth="1.500" />
          <path d="M878 255L887 246H912L904 255Z" fill="#f1f1f3" stroke="#444" strokeWidth="1.500" />
          <path d="M853 254H878V279H853ZM878 255H904V279H878Z" fill="#cdd2da" stroke="#444" strokeWidth="1.500" />
          <path d="M904 255L912 246V268L904 279Z" fill="#9aa2b3" stroke="#444" strokeWidth="1.500" />
          <path d="M859 219H865V227H873V234H865V241H859V234H851V227H859Z" fill="#fff" stroke="#222" strokeWidth="1.500" />
        </Ico>
        <Ico box="936 216 64 64" className="mt-[14px] -ml-1 h-[64px] w-[64px]">
          <path d="M941 238L955 222V258L941 272Z" fill="#d3d6dc" stroke="#444" strokeWidth="1.500" />
          <path d="M954 228Q956 221 962 222Q966 224 964 232V242Q960 248 955 244Z" fill="#c1c7d0" stroke="#444" strokeWidth="1.500" />
          <path d="M982 230L996 242V275L982 262Z" fill="#aab0bf" stroke="#444" strokeWidth="1.500" />
          <path d="M972 242Q976 237 982 242V264Q976 270 972 264Z" fill="#d3d6dc" stroke="#444" strokeWidth="1.500" />
          <path d="M977 233V243M959 244V253" stroke="#f08020" strokeWidth="2.500" />
        </Ico>
      </Group>
      <Group width="w-[198px]" iconPad="pl-[68px]" labelPad="pl-[23px]" label="CONSTRUCT" labelWidth="w-[132px]">
        <Ico box="1084 216 64 64" className={big}>
          <path d="M1087 234L1103 219H1121L1106 234V276H1087Z" fill="#d6dae2" stroke="#333" strokeWidth="1.500" />
          <path d="M1087 234L1103 219H1121L1106 234Z" fill="#f4f4f6" stroke="#333" strokeWidth="1.500" />
          <path d="M1106 234L1121 219V261L1106 276Z" fill="#4f9a3b" stroke="#2c5f1f" strokeWidth="1.500" />
          <path d="M1128 234L1144 219V261L1128 276Z" fill="#ec935a" stroke="#9a5425" strokeWidth="1.500" />
        </Ico>
      </Group>
      <Group width="w-[148px]" iconPad="pl-[35px]" labelPad="pl-[23px]" label="INSPECT" labelWidth="w-[87px]">
        <Ico box="1249 211 78 78" className="mt-[9px] h-[78px] w-[78px]">
          <rect x="1249" y="211" width="78" height="78" rx="2" fill="#5989b3" />
          <path d="M1261 237H1315M1261 231V242M1315 231V242" stroke="#d6d6d6" strokeWidth="2.500" />
          <rect x="1260" y="253" width="55" height="10" fill="#f0c23a" stroke="#8a4a14" strokeWidth="1.500" />
          <path d="M1265 254V258M1270 254V257M1275 254V258M1280 254V257M1285 254V258M1290 254V257M1295 254V258M1300 254V257M1305 254V258M1310 254V257" stroke="#5e3a10" strokeWidth="1.200" />
        </Ico>
      </Group>
      <Group width="w-[138px]" iconPad="pl-[38px]" labelPad="pl-[22px]" label="INSERT" labelWidth="w-[74px]">
        <Ico box="1400 216 64 64" className={big}>
          <rect x="1404" y="220" width="56" height="56" fill="url(#sky)" />
          <circle cx="1444" cy="234" r="6" fill="#fff6c6" stroke="#f8e08a" strokeWidth="1.500" />
          <path d="M1430 276V258L1444 250L1460 268V276Z" fill="#9aa6b4" />
          <path d="M1404 276V254L1416 247H1424L1440 262L1454 276Z" fill="#666d7e" />
          <path d="M1424 247L1428 260L1434 276H1454L1440 262Z" fill="#8a92a3" />
          <rect x="1404" y="220" width="56" height="56" stroke="#333" strokeWidth="1.500" />
        </Ico>
      </Group>
      <Group width="w-[118px]" iconPad="pl-[28px]" labelPad="pl-[22px]" label="MAKE" labelWidth="w-[61px]">
        <Ico box="1528 216 64 64" className={big}>
          <path d="M1531 232L1538 222H1582L1589 232V270Q1589 276 1583 276H1537Q1531 276 1531 270Z" fill="#dedfe2" stroke="#333" strokeWidth="2" />
          <path d="M1532 232L1538 223H1582L1588 232Z" fill="#f8f8f8" />
          <rect x="1537" y="241" width="46" height="30" rx="4" fill="#5b5b5b" stroke="#333" />
          <path d="M1543 253H1577L1582 267H1538Z" fill="#f5f5f5" stroke="#333" />
          <path d="M1553 254L1551 266M1563 254V266M1571 254L1574 266M1541 260H1579" stroke="#bbb" />
          <path d="M1553 241H1561V253L1557 258L1553 253Z" fill="#7cb4e6" stroke="#24426e" />
          <circle cx="1580" cy="235" r="2.800" fill="#1b8a24" />
        </Ico>
      </Group>
      <Group width="w-[158px]" iconPad="pl-[46px]" labelPad="pl-[23px]" label="ADD-INS" labelWidth="w-[96px]" arrow={false}>
        <Ico box="1664 216 64 64" className={big}>
          <rect x="1670" y="224" width="44" height="41" fill="#bcc4d1" stroke="#444" strokeWidth="1.500" />
          <rect x="1670" y="224" width="44" height="8" fill="#727d93" stroke="#444" strokeWidth="1.500" />
          <path d="M1676 239L1681 243.500L1676 248M1686 243H1694" stroke="#333" strokeWidth="2" />
          <g transform="translate(1714 264)" fill="#9dbde2" stroke="#355b8a" strokeWidth="1.500">
            <path d="M-2.500 -12H2.500L4 -8L8.500 -10L11 -6L8.500 -3L12 -1.500V3L8 4.500L9 9L4.500 11L2 8L0 12H-3L-4.500 8L-9 9.500L-11 5L-8 3L-12 1V-3L-8 -4.500L-10 -8.500L-6 -11Z" />
            <circle r="3.500" fill="#f2f4f7" />
          </g>
        </Ico>
      </Group>
      <Group width="w-[140px]" iconPad="pl-[38px]" labelPad="pl-[23px]" label="SELECT" labelWidth="w-[76px]" last>
        <Ico box="1814 216 64 64" className={big}>
          <rect x="1818.500" y="220.500" width="39" height="25" stroke="#5aa80f" strokeWidth="3" />
          <path d="M1857 247V268L1861.500 264L1867 276L1872 274L1867 262L1874 261Z" fill="#f2f2f4" stroke="#444" strokeWidth="1.500" />
        </Ico>
      </Group>
    </div>
  );
}

/* ---------- browser tree ---------- */

function Bulb({ blue }: { blue?: boolean }) {
  return (
    <svg viewBox="0 0 18 30" className="h-[30px] w-[18px] shrink-0">
      <path d="M5.500 20Q5 17 3 14.500Q.8 12 .8 8.500Q1.500 1 9 1Q16.500 1 17.200 8.500Q17.200 12 15 14.500Q13 17 12.500 20Z" fill={blue ? "#a3c5ec" : "#fdf0b4"} stroke="#4a4a4a" strokeWidth="1.300" />
      <ellipse cx="7" cy="7" rx="3" ry="3.500" fill="#fff" opacity=".85" />
      <rect x="5.500" y="20" width="7" height="6.500" fill="#e8e8e8" stroke="#333" strokeWidth="1.300" />
      <path d="M6 27.500H12L9 30Z" fill="#111" />
    </svg>
  );
}

function Folder() {
  return (
    <svg viewBox="0 0 30 27" className="h-[27px] w-[30px] shrink-0">
      <path d="M1 26V2H12L15 5H29V26Z" fill="url(#silver)" stroke="#3c3c3c" strokeWidth="1.600" />
      <path d="M1 5.500H13L15 3" stroke="#6a6f7c" strokeWidth="1.200" fill="none" />
    </svg>
  );
}

function SketchIcon({ pin }: { pin?: boolean }) {
  return (
    <svg viewBox="0 0 30 32" className="h-[32px] w-[30px] shrink-0">
      <rect x="1" y="1.500" width="28" height="28" fill="url(#silver)" stroke="#333" strokeWidth="1.700" />
      <path d="M4.500 5V25.500H25" stroke="#444" strokeWidth="1.300" fill="none" />
      <rect x="3" y="24" width="3.500" height="3.500" fill="#2f6fdb" />
      <path d="M8 22L12 14L25 1L30 2V5L17 18Z" fill="#fbd02a" stroke="#54431a" strokeWidth="1" />
      <path d="M8 22L12 14L17 18Z" fill="#f7e8d8" stroke="#555" strokeWidth=".8" />
      <path d="M8 22L9.500 18.500L12 20.500Z" fill="#333" />
      {pin && (
        <>
          <path d="M6 12V21" stroke="#222" strokeWidth="2.400" />
          <path d="M2.500 0H9.500V3H8.500V7L12.500 10V12.500H0V10L3.500 7V3H2.500Z" fill="#c8562b" stroke="#7c2c10" strokeWidth="1" />
        </>
      )}
    </svg>
  );
}

function Expander({ open, pad }: { open?: boolean; pad: string }) {
  return (
    <div className={`flex shrink-0 ${pad}`}>
      {open ? (
        <svg viewBox="0 0 14 14" className="h-[14px] w-[14px]"><path d="M13 1V13H1Z" fill="#555" stroke="#000" strokeWidth="1.800" /></svg>
      ) : (
        <svg viewBox="0 0 13 19" className="h-[19px] w-[13px]"><path d="M1 1H3.500L12 9.500L3.500 18H1Z" fill="#fff" stroke="#222" strokeWidth="1.500" /></svg>
      )}
    </div>
  );
}

function Hatch() {
  return (
    <svg className="absolute right-1 bottom-0.5 left-[48px] h-[10px] w-[calc(100%-52px)]">
      <rect width="100%" height="10" fill="url(#hatch)" />
    </svg>
  );
}

const pinned = new Set([2, 3, 4, 5, 6, 9, 10, 11, 12, 14]);

function Tree() {
  const cell = "relative flex h-10 items-center bg-[#cdcdcd]";
  return (
    <div className="flex flex-col gap-2 pt-[10px] font-[Noto_Sans,sans-serif] text-[22px] font-medium text-[#4a4a4a]">
      <div className="flex h-10 items-center">
        <Expander open pad="w-[80px] pl-[45px]" />
        <div className="flex h-10 w-[362px] items-center bg-[#cdcdcd]">
          <div className="flex h-10 w-[312px] items-center bg-[#b7b7b7] pl-1">
            <div className="flex h-8 w-[308px] items-center border-l-[6px] border-[#8fd0f5] bg-[#868686]">
              <div className="ml-[13px] flex"><Bulb /></div>
              <svg viewBox="0 0 26 26" className="ml-[28px] h-[26px] w-[26px]">
                <path d="M1 6L6 1H25L20 6V25H1Z" fill="url(#silverLight)" stroke="#333" strokeWidth="1.500" />
                <path d="M20 6L25 1V20L20 25Z" fill="#7a8496" stroke="#333" />
              </svg>
              <Fit className="ml-[30px] w-[167px] pb-0.5 font-bold text-white">Pipe Holder v3</Fit>
            </div>
          </div>
          <svg viewBox="0 0 28 28" className="ml-[8px] h-[28px] w-[28px]">
            <circle cx="14" cy="14" r="12.500" fill="url(#silverLight)" stroke="#444" strokeWidth="1.500" />
            <circle cx="14" cy="14" r="5.500" fill="#333" />
          </svg>
        </div>
      </div>
      <div className="flex items-center">
        <Expander pad="w-[116px] pl-[81px]" />
        <div className={`${cell} w-[284px]`}>
          <Gear className="ml-[6px] h-8 w-8" />
          <Fit className="ml-[28px] w-[202px] pb-0.5">Document Settings</Fit>
        </div>
      </div>
      <div className="flex items-center">
        <Expander pad="w-[116px] pl-[81px]" />
        <div className={`${cell} w-[228px]`}>
          <div className="ml-[7px] flex"><Folder /></div>
          <Fit className="ml-[29px] w-[143px] pb-0.5">Named Views</Fit>
        </div>
      </div>
      <div className="flex items-center">
        <Expander pad="w-[116px] pl-[81px]" />
        <div className={`${cell} w-[198px]`}>
          <div className="ml-[13px] flex items-center gap-[26px]"><Bulb blue /><Folder /></div>
          <Fit className="ml-[28px] w-[67px] pb-0.5">Origin</Fit>
        </div>
      </div>
      <div className="flex items-center">
        <Expander pad="w-[116px] pl-[81px]" />
        <div className={`${cell} w-[206px]`}>
          <div className="ml-[13px] flex items-center gap-[26px]"><Bulb /><Folder /></div>
          <Fit className="ml-[28px] w-[71px] pb-0.5">Bodies</Fit>
          <Hatch />
        </div>
      </div>
      <div className="flex items-center">
        <Expander open pad="w-[116px] pl-[81px]" />
        <div className={`${cell} w-[230px]`}>
          <div className="ml-[13px] flex items-center gap-[26px]"><Bulb /><Folder /></div>
          <Fit className="ml-[29px] w-[93px] pb-0.5">Sketches</Fit>
          <Hatch />
        </div>
      </div>
      {Array.from({ length: 15 }, (_, i) => i + 1).map((n) => (
        <div key={n} className={`${cell} ml-[152px] ${n < 10 ? "w-[222px]" : n === 10 || n === 14 ? "w-[238px]" : "w-[230px]"}`}>
          <div className="ml-[13px] flex items-center gap-[26px]"><Bulb /><SketchIcon pin={pinned.has(n)} /></div>
          <Fit className={`ml-[28px] pb-0.5 ${n < 10 ? "w-[85px]" : "w-[98px]"}`}>{`Sketch${n}`}</Fit>
          {n === 13 && <Hatch />}
        </div>
      ))}
    </div>
  );
}

function Knob({ plus, className }: { plus?: boolean; className: string }) {
  return (
    <svg viewBox="0 0 16 16" className={`h-[16px] w-[16px] ${className}`}>
      <rect width="16" height="16" rx="5" fill="#2e2e2e" />
      <path d={plus ? "M2 8H14M8 2V14" : "M2 8H14"} stroke="#cfcfcf" strokeWidth="1.800" />
    </svg>
  );
}

/* ---------- model ---------- */

function Hole({ x, y, fill = "#ececec" }: { x: number; y: number; fill?: string }) {
  return <circle cx={x} cy={y} r="26" fill={fill} stroke="#1c1a16" strokeWidth="1.800" strokeDasharray="7 1" />;
}

function Block({ x, w, sheen }: { x: number; w: number; sheen: string }) {
  return (
    <>
      <g className="drop-shadow-[0_0_6px_rgba(0,0,0,0.25)]">
        <rect x={x} y="415" width={w} height="1036" fill="#9f9886" />
      </g>
      <rect x={x} y="415" width={w} height="122" fill="url(#seg)" />
      <rect x={x} y="415" width={w} height="122" fill="url(#shadeDown)" />
      <rect x={x} y="659" width={w} height="95" fill="url(#soft)" />
      <rect x={x} y="754" width={w} height="358" fill={sheen} />
      <rect x={x} y="1112" width={w} height="95" fill="url(#softUp)" />
      <rect x={x} y="1329" width={w} height="122" fill="url(#segUp)" />
      <rect x={x} y="1329" width={w} height="122" fill="url(#shadeUp)" />
      <path d={`M${x} 537H${x + w}M${x} 1328.500H${x + w}`} stroke="#26261f" strokeWidth="2" />
      <path d={`M${x} 659H${x + w}M${x} 1207H${x + w}`} stroke="#000" strokeWidth="2" />
      <path d={`M${x} 753.500H${x + w}M${x} 1112H${x + w}`} stroke="#4c4a44" strokeWidth="2.500" />
      <path d={`M${x} 415.500H${x + w}M${x} 1450.500H${x + w}`} stroke="#77746b" strokeWidth="2" />
    </>
  );
}

function Dim({ x, y, size = 29, dark }: { x: number; y: number; size?: number; dark?: boolean }) {
  return (
    <text x={x} y={y} transform={`rotate(-90 ${x} ${y})`} fontSize={size} textLength="78" fill={dark ? "#211a10" : "#2c2a24"} opacity={dark ? 0.75 : 0.65} fontFamily="Liberation Sans">
      Ø3.00
    </text>
  );
}

function Rosette({ x, y, faint = true }: { x: number; y: number; faint?: boolean }) {
  return (
    <g opacity={faint ? 0.75 : 1}>
      <circle cx={x} cy={y} r="31" fill="none" stroke={faint ? "#55503f" : "#000"} strokeWidth={faint ? 1.6 : 2} />
      <path d={`M${x} ${y - 31}L${x + 5} ${y}L${x} ${y + 31}L${x - 5} ${y}Z`} fill={faint ? "#26241e" : "#000"} />
      <circle cx={x} cy={y} r="8" fill={faint ? "#3c392f" : "#000"} />
    </g>
  );
}

function Model() {
  const black: [number, number][] = [[2289, 415.5], [2533, 415.5], [2289, 537], [2533, 537], [2533, 659], [2533, 1207], [2289, 1329], [2533, 1329], [2289, 1450], [2533, 1450]];
  const gray: [number, number][] = [[2289, 659], [2411, 659], [2289, 1207], [2411, 1207], [2411, 1329]];
  return (
    <svg viewBox="0 193 2880 1399" className="absolute inset-0 h-full w-full" fill="none">
      <g className="drop-shadow-[0_0_5px_rgba(0,0,0,0.2)]">
        <rect x="1417" y="608" width="832" height="101" fill="url(#bar)" />
        <rect x="1417" y="1155" width="832" height="102" fill="url(#bar)" />
      </g>
      <path d="M1417 709H2249" stroke="#2f2c26" strokeWidth="2" />
      <path d="M1417 1155H2249" stroke="#77736a" strokeWidth="2" />
      <path d="M1417 1257H2249" stroke="#000" strokeWidth="2" />
      <Block x={1173} w={244} sheen="url(#mid)" />
      <Block x={2249} w={244} sheen="url(#midDull)" />
      <path d="M1174 415V1451M2492.500 415V1451" stroke="#85827b" strokeWidth="2" />
      <path d="M1417 416V1450" stroke="#170f02" strokeWidth="2.200" />
      <path d="M2249 416V1450" stroke="#000" strokeWidth="2.200" />

      <Hole x={1295} y={476.5} />
      <Hole x={1234} y={598} />
      <Hole x={1356} y={598} />
      <Hole x={1295} y={933} />
      <Hole x={1234} y={1267.5} />
      <Hole x={1356} y={1267.5} />
      <Hole x={1295} y={1389} />

      <rect x="2289" y="415" width="204" height="122" fill="#a67c45" opacity=".22" />
      <rect x="2289" y="1329" width="204" height="122" fill="#a67c45" opacity=".27" />
      <rect x="2289" y="537" width="122" height="122" fill="#c08c48" opacity=".12" />
      <rect x="2289" y="1207" width="122" height="122" fill="#c08c48" opacity=".12" />
      <rect x="2411" y="537" width="82" height="122" fill="#c08c48" opacity=".05" />
      <rect x="2411" y="1207" width="82" height="122" fill="#c08c48" opacity=".05" />
      <path d="M2493.500 415H2534V660H2493.500ZM2493.500 1206H2534V1451H2493.500Z" fill="#eee5da" />

      <Hole x={2370.7} y={476.5} fill="#eee6dd" />
      <Hole x={2370.7} y={1389} fill="#eee6dd" />
      <Hole x={2370.7} y={933} />
      <path d="M2389 915Q2396 922 2396.500 933Q2396 945 2389 951Q2373 933 2389 915Z" fill="#eedfd2" />
      {[598, 1267.5].map((y) => (
        <g key={y}>
          <Hole x={2310} y={y} fill="#efdfcc" />
          <Hole x={2431} y={y} fill="#eee5dc" />
          <g stroke="#5f594c" strokeWidth="1.600">
            <path d={`M2289 ${y - 61}L2411 ${y + 61}M2411 ${y - 61}L2289 ${y + 61}M2411 ${y - 61}L2490 ${y + 18}M2490 ${y - 18}L2411 ${y + 61}`} />
          </g>
          <path d={`M2489 ${y - 17}L2533 ${y - 61}M2489 ${y + 17}L2533 ${y + 61}`} stroke="#000" strokeWidth="2" />
          <Rosette x={2350.7} y={y} />
          <Rosette x={2472} y={y} />
          <path d={`M2326 ${y - 19}Q2315 ${y} 2326 ${y + 19}M2447 ${y - 19}Q2436 ${y} 2447 ${y + 19}M2495 ${y - 22}Q2510 ${y} 2495 ${y + 22}`} stroke="#111" strokeWidth="2.200" strokeDasharray="6 1.500" />
          <Dim x={2384} y={y + 24} />
          <Dim x={2506} y={y + 24} />
        </g>
      ))}
      <path d="M2493 537H2533M2493 1328.500H2533" stroke="#111" strokeWidth="2" />
      <path d="M2289 415.500L2533 537M2289 537L2533 415.500" stroke="#1b160e" strokeWidth="2.200" />
      <path d="M2289 1329L2533 1450M2289 1450L2533 1329M2411 1340V1389" stroke="#2a2114" strokeWidth="2.200" />
      <Rosette x={2411} y={476.5} faint={false} />
      <Dim x={2446} y={500} size={32} dark />
      <circle cx="2411" cy="1389" r="31" stroke="#33291a" strokeWidth="2" />
      <circle cx="2411" cy="1389" r="8.500" fill="#140d03" />

      {gray.map(([x, y]) => <circle key={`${x}-${y}`} cx={x} cy={y} r="8.500" fill="#45423a" opacity=".85" />)}
      {black.map(([x, y]) => <circle key={`${x}-${y}`} cx={x} cy={y} r="8.800" fill="#000" />)}

      <path d="M2289 537V1329" stroke="#2b3c66" strokeWidth="2.600" />
      <circle cx="2411" cy="933" r="31" stroke="#4f78cc" strokeWidth="1.600" />
      <path d="M2389 911A31 31 0 0 0 2389 955" stroke="#1254f5" strokeWidth="2.600" />
      <path d="M2403 904L2414 932L2419 963L2409 940Z" fill="#26241e" />
      <text x="2368" y="885" transform="rotate(79 2368 885)" fontSize="30" textLength="80" fill="#2c2a24" opacity=".65" fontFamily="Liberation Sans">Ø3.00</text>
      <path d="M2411 537V1329" stroke="#0a4dff" strokeWidth="2.200" />
      {[542.7, 933, 1091].map((y) => <circle key={y} cx="2411" cy={y} r="7.500" fill="#dfe3ea" stroke="#444" strokeWidth="2" />)}

      <path d="M1417 608H2249" stroke="#1d3668" strokeWidth="2.400" />
      <path d="M1417 606H2249" stroke="#aebdd8" strokeWidth="1.500" />
      <path d="M1417 608V709M1417 1155V1257" stroke="#0c2a80" strokeWidth="2.200" />
      <circle cx="1417" cy="608" r="8" fill="#77777a" stroke="#48484a" strokeWidth="2" />
      <circle cx="1418" cy="709.500" r="6" fill="#55565c" stroke="#55555a" strokeWidth="2" />
      <circle cx="1418" cy="1156" r="6" fill="#4b4c55" stroke="#55555a" strokeWidth="2" />
      <circle cx="1417" cy="1257" r="7" fill="#d9d9d6" stroke="#6d6d6d" strokeWidth="2" />
      <circle cx="2249" cy="608" r="7.500" fill="#4b3a48" stroke="#5a5a5e" strokeWidth="2" />
      <path d="M1825 608A8 8 0 0 1 1841 608Z" fill="#000" />
      <path d="M1825 609A8 8 0 0 0 1841 609Z" fill="#4a4740" />

      <path d="M1417 1450.500H2249" stroke="#000" strokeWidth="4.500" />
      <path d="M1424 1450L1476 1438V1462ZM2248 1450L2190 1437V1463Z" fill="#000" />
      <circle cx="1417" cy="1450" r="3" fill="#0b57c4" />
      <text x="1765" y="1483" fontSize="29.500" fontWeight="700" textLength="136" fill="#0c0c0c" fontFamily="Liberation Sans">41.00 mm</text>
    </svg>
  );
}

function ViewCube() {
  return (
    <div className="absolute top-[75px] left-[2701px] h-[105px] w-[104px] border-2 border-[#a3a3a3] bg-[#e9e9e9] font-[Liberation_Sans,sans-serif] shadow-[0_0_14px_rgba(0,0,0,0.18)]">
      <div className="mt-[18px] ml-[17px] flex h-[66px] w-[66px] items-center justify-center bg-[#dfe1e6]">
        <svg viewBox="0 0 30 50" className="h-[50px] w-[30px]">
          <text x="-46" y="25" fontSize="26" fontWeight="700" textLength="43" lengthAdjust="spacingAndGlyphs" transform="rotate(-90)" fill="#97999e">TOP</text>
        </svg>
      </div>
      <span className="absolute -top-[31px] left-[85px] text-[26px] leading-[30px] font-bold text-[#fa9494]">X</span>
      <span className="absolute top-[78px] -left-[26px] text-[26px] leading-[30px] font-bold text-[#94fa98]">Y</span>
      <span className="absolute top-[94px] left-[99px] text-[26px] leading-[30px] font-bold text-[#8f8ffa]">Z</span>
    </div>
  );
}

function NavBar() {
  return (
    <div className="flex h-12 gap-[14px] self-start">
      <div className="flex w-[289px] items-center bg-[#c9c9c9]">
        <Ico box="0 0 30 32" className="ml-[8px] h-[32px] w-[30px]">
          <path d="M15 1L20 9H17V15H13V9H10Z" fill="#fff" stroke="#444" strokeWidth="1.500" />
          <path d="M13 20H17V30H13Z" fill="#fff" stroke="#444" strokeWidth="1.500" />
          <ellipse cx="15" cy="17.500" rx="13.500" ry="5" stroke="#444" strokeWidth="1.800" />
          <path d="M4 21L12 20L9 27Z" fill="#444" />
        </Ico>
        <Arrow className="ml-[10px] text-[#333]" />
        <Ico box="0 0 30 30" className="ml-[7px] h-[30px] w-[30px]">
          <path d="M2 10L10 3L12 5L20 1V9Z" fill="#e8e8e8" stroke="#444" strokeWidth="1.500" />
          <rect x="1" y="10" width="28" height="18" fill="#eceef0" stroke="#444" strokeWidth="1.500" />
          <rect x="6" y="14" width="18" height="10" fill="#a7acb6" stroke="#444" strokeWidth="1.500" />
        </Ico>
        <Ico box="0 0 31 32" className="ml-[22px] h-[32px] w-[31px]">
          <path d="M10 30L1 17Q3 13 8 18V5Q11 2 12 6L13 14L14 2Q17 0 18 3L18 14L22 4Q25 3 25 6L23 16L28 10Q31 10 30 13L24 24L21 30Z" fill="#fdfdfd" stroke="#555" strokeWidth="1.300" />
        </Ico>
        <Ico box="0 0 32 32" className="ml-[20px] h-[32px] w-[32px]">
          <path d="M18 18L29 30" stroke="#3f3f3f" strokeWidth="4" />
          <circle cx="12" cy="11" r="10.500" fill="#edf3f2" stroke="#555" strokeWidth="1.500" />
          <path d="M27 1V9M23.500 5H31M24 12H31" stroke="#333" strokeWidth="1.500" />
        </Ico>
        <Ico box="0 0 32 32" className="ml-[20px] h-[31px] w-[32px]">
          <path d="M18 18L29 30" stroke="#3f3f3f" strokeWidth="4" />
          <circle cx="12" cy="11" r="10.500" fill="#f4f4f4" stroke="#555" strokeWidth="1.500" />
          <rect x="7" y="6" width="10" height="10" fill="#fff" stroke="#333" strokeWidth="1.500" />
        </Ico>
        <Arrow className="ml-[9px] text-[#333]" />
      </div>
      <div className="flex w-[187px] items-center bg-[#c9c9c9]">
        <Ico box="0 0 30 30" className="ml-[8px] h-[30px] w-[31px]">
          <rect x="1" y="1" width="28" height="22" fill="#eceef0" stroke="#444" strokeWidth="1.500" />
          <rect x="4" y="4" width="22" height="16" fill="#86aada" stroke="#456" strokeWidth="1.200" />
          <path d="M12 23H18V26H23V29H7V26H12Z" fill="#d8dade" stroke="#444" strokeWidth="1.200" />
        </Ico>
        <Arrow className="ml-[4px] text-[#333]" />
        <Ico box="0 0 30 30" className="ml-[9px] h-[30px] w-[30px]">
          <rect x="1" y="1" width="28" height="28" fill="url(#silver)" stroke="#444" strokeWidth="1.500" />
          <path d="M6 1V29M11 1V29M15.500 1V29M20 1V29M25 1V29M1 6H29M1 11H29M1 15.500H29M1 20H29M1 25H29" stroke="#666" />
        </Ico>
        <Arrow className="ml-[5px] text-[#333]" />
        <Ico box="0 0 30 26" className="ml-[9px] h-[26px] w-[30px]">
          <rect x="1" y="1" width="28" height="24" fill="#b3cbec" stroke="#34507e" strokeWidth="1.800" />
          <path d="M15 1V25M1 13H29" stroke="#34507e" strokeWidth="2" />
          <path d="M4 4H12V10H4ZM18 4H26V10H18ZM4 16H12V22H4ZM18 16H26V22H18Z" fill="#8fb1dd" stroke="#5a7db0" />
        </Ico>
        <Arrow className="ml-[5px] text-[#333]" />
      </div>
    </div>
  );
}

function Workspace() {
  const panel = "flex items-center border-2 border-[#acacac] bg-[#d2d2d2] font-[Noto_Sans,sans-serif] text-[22.5px] text-[#6a6a6a]";
  return (
    <main className="relative h-[1399px] bg-[#ececec] pt-[9px]">
      <Model />
      <div className="relative flex h-[1390px] flex-col">
        <Ribbon />
        <div className="flex h-[1212px] items-start">
          <div className="w-[652px] pt-2">
            <div className={`${panel} ml-2 h-[50px] w-[600px]`}>
              <svg viewBox="0 0 20 12" className="ml-[8px] h-[12px] w-[20px]"><path d="M10 0V12L0 6ZM20 0V12L10 6Z" fill="#2f2f2f" /></svg>
              <Fit className="ml-[24px] w-[101px] pb-0.5">BROWSER</Fit>
              <Knob className="ml-auto" />
              <div className="mr-[3px] ml-[14px] h-[22px] w-[6px] border-x-2 border-[#909090]" />
            </div>
            <Tree />
          </div>
          <div className={`${panel} mt-[10px] h-[50px] w-[500px]`}>
            <Knob plus className="ml-[11px]" />
            <Fit className="ml-[25px] w-[99px] pb-0.5">MEASURE</Fit>
          </div>
        </div>
        <div className="flex">
          <div className={`${panel} ml-2 h-[49px] w-[600px] shrink-0`}>
            <Fit className="ml-[52px] w-[125px] pb-0.5">COMMENTS</Fit>
            <Knob plus className="ml-auto" />
            <div className="mr-[3px] ml-[14px] h-[22px] w-[6px] border-x-2 border-[#909090]" />
          </div>
          <div className="w-[586px] shrink-0" />
          <div className="pt-0.5"><NavBar /></div>
          <Fit className="mt-[8px] ml-[575px] w-[555px] font-[Noto_Sans,sans-serif] text-[23px] font-bold text-[#333]">1 Sketch Curve 1 Edge | Min Distance : 41.00 mm</Fit>
        </div>
      </div>
      <div className="absolute top-[1257px] left-[1416px] flex h-[43px] w-[114px] items-center rounded-[2px] bg-[#cbcbcb]/90 font-[Noto_Sans,sans-serif] text-[22px] text-[#4a4a4a]">
        <span className="ml-[18px] w-[14px] pb-0.5">1</span>
        <Gear className="ml-[32px] h-8 w-8" />
      </div>
      <div className="absolute top-[1257px] left-[2248px] flex h-[44px] w-[52px] items-center justify-center rounded-[2px] bg-[#cbcbcb]/90 pr-1 pb-0.5 font-[Noto_Sans,sans-serif] text-[22px] text-[#4a4a4a]">2</div>
      <ViewCube />
    </main>
  );
}

/* ---------- timeline ---------- */

const history = "SESESETTESESETTSSETSESESETSESETJMMMSEEMESSETT".split("");

function Feature({ kind }: { kind: string }) {
  return (
    <svg viewBox="0 0 32 32" className="h-8 w-8" fill="none">
      {kind === "S" && (
        <>
          <rect x="1.300" y="1.300" width="29.400" height="29.400" fill="#f3f7fc" stroke="#000" strokeWidth="2.600" />
          <path d="M3 22L29 12V29H3Z" fill="#b8d0ee" />
          <path d="M8 6V26H25" stroke="#0d1a3c" strokeWidth="2.800" />
          <path d="M9 25L13 16L24 2H31V5L18 22Z" fill="#f8c51c" />
          <path d="M11 22L20 11L24 15L16 23Z" fill="#e59a48" />
          <path d="M8 27L10 20L15 24Z" fill="#222" />
        </>
      )}
      {kind === "E" && (
        <>
          <path d="M2 8L8 1H20V22L14 31H2Z" fill="#a9c6ea" stroke="#2c4674" strokeWidth="1.800" />
          <path d="M2 25H14V31H2Z" fill="#dcdfe4" stroke="#555" strokeWidth="1.200" />
          <path d="M14 8L20 1V22L14 31Z" fill="#6889b8" />
          <path d="M3 8L8 2H19L14 8Z" fill="#d6e4f4" />
          <path d="M27.500 30V5" stroke="#444" strokeWidth="2" />
          <path d="M22.500 7L27.500 1L32 7Z" fill="#444" />
        </>
      )}
      {kind === "T" && (
        <>
          <path d="M7 3Q17 -3 27 3V29Q17 35 7 29Z" fill="#8e929b" />
          <path d="M7 3Q17 -3 27 3L26 6Q17 2 8 6Z" fill="#3f424b" />
          <path d="M6 8L28 12M6 15.500L28 19.500M6 23L28 27" stroke="#43464f" strokeWidth="5" strokeLinecap="round" />
          <path d="M7 9.500L26 13M7 17L26 20.500M7 24.500L26 28" stroke="#d3d6dc" strokeWidth="2.400" />
        </>
      )}
      {kind === "J" && (
        <>
          <path d="M1 4Q7 -1 13 4V14Q7 19 1 14Z" fill="#f2f2f2" stroke="#666" strokeWidth="1.500" />
          <path d="M18 18Q24 13 30 18V29Q24 33 18 29Z" fill="#f2f2f2" stroke="#444" strokeWidth="1.800" />
          <path d="M4 19V26H10" stroke="#1b6fc9" strokeWidth="2.500" />
          <path d="M8 21L14 26L8 30Z" fill="#1b6fc9" />
        </>
      )}
      {kind === "M" && (
        <>
          <path d="M16 0L21 7H11ZM16 32L21 25H11ZM0 16L7 11V21ZM32 16L25 11V21Z" fill="#3f3f3f" />
          <path d="M16 6V11M16 21V26M6 16H11M21 16H26" stroke="#3f3f3f" strokeWidth="3" />
          <rect x="13" y="13" width="6" height="6" stroke="#3f3f3f" strokeWidth="2" fill="#fff" />
        </>
      )}
    </svg>
  );
}

function Timeline() {
  return (
    <section className="flex h-[100px] rounded-b-[12px] bg-linear-to-b from-[#cfcfcf] to-[#bcbcbc] pt-[8px]">
      <svg viewBox="0 0 260 40" className="mt-[12px] mr-[24px] ml-[4px] h-[40px] w-[260px]">
        <g fill="#4b4b4b">
          <path d="M17 8H20V36H17ZM42 8V36L21 22Z" />
          <path d="M86 10V34L67 22ZM89 16H92V28H89Z" />
          <path d="M118 6V38L142 22Z" />
          <path d="M166 16H169V28H166ZM172 10V34L192 22Z" />
          <path d="M218 8V36L238 22ZM239 8H242V36H239Z" />
        </g>
      </svg>
      <div className="relative flex w-[2152px] flex-col pt-1">
        <div className="h-2 bg-[#8dd0f5]" />
        <div className="flex pt-2">
          {history.map((k, i) => (
            <div key={i} className="flex w-12 shrink-0 justify-start pl-[4px]"><Feature kind={k} /></div>
          ))}
        </div>
        <div className="mt-2 ml-[20px] flex w-[2114px] justify-between border-b-4 border-[#666]">
          {history.map((_, i) => <div key={i} className="h-2 w-[3px] bg-[#666]" />)}
        </div>
        <svg viewBox="0 0 30 12" className="absolute top-0 left-[1299px] h-[12px] w-[32px]">
          <path d="M2 12L8 0M12 12L18 0M22 12L28 0" stroke="#4b4b4b" strokeWidth="3.400" />
        </svg>
        <svg viewBox="0 0 24 64" className="absolute top-[8px] -right-4 h-[64px] w-[24px]">
          <path d="M0 0H24V9L15 18H14V64H10V18H9L0 9Z" fill="#666" />
        </svg>
      </div>
      <div className="mt-[16px] mr-[8px] ml-auto"><Gear className="h-8 w-8" /></div>
    </section>
  );
}

function Dock() {
  return (
    <footer className="flex h-[108px] justify-start bg-linear-to-r from-[#120d0c] to-[#10151f] pl-[72px]">
      <div className="flex h-[108px] w-[2736px] rounded-t-[10px] bg-[linear-gradient(90deg,#554f51_0%,#5f5355_20%,#5d5456_47%,#5a5c66_54%,#6c7890_66%,#6a6b7c_70%,#8a685f_74%,#cf7455_78%,#cb7557_83%,#b06f5f_88%,#806a70_93%,#61708a_100%)] pt-[7px] pl-[5px]">
        {dock.map((d) => <DockItem key={d.name} art={d.art} open={d.open} />)}
        <div className="mt-[6px] mr-[18px] ml-[20px] h-[80px] w-[2px] bg-[#463f47]" />
        {minis.map((d) => <DockItem key={d.name} art={d.art} />)}
      </div>
    </footer>
  );
}

export default function App() {
  return (
    <div className="h-[1800px] w-[2880px] overflow-hidden bg-[#241a1c]">
      <Defs />
      <MenuBar />
      <TitleBar />
      <QuickBar />
      <Tabs />
      <Workspace />
      <Timeline />
      <Dock />
    </div>
  );
}
